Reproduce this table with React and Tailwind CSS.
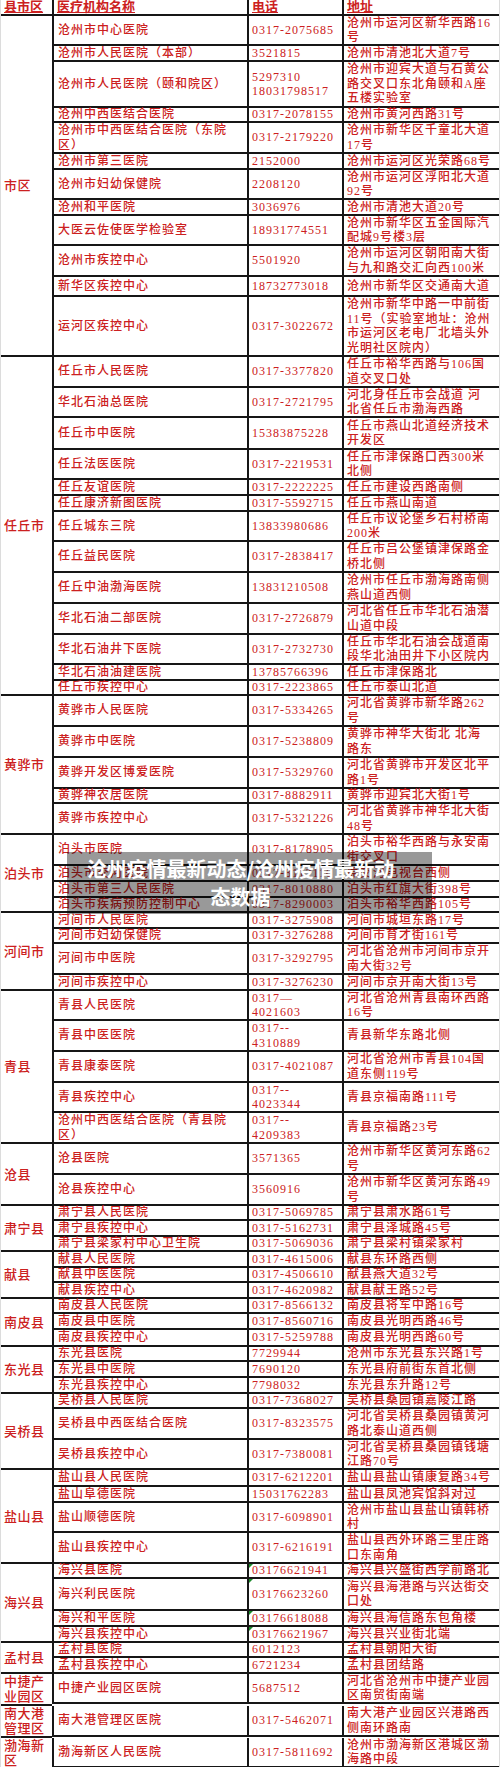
import React from "react";

// 沧州市各县市区医疗机构一览 (name, phone, address, row height)
const sections = [
  {
    area: "市区",
    rows: [
      ["沧州市中心医院", "0317-2075685", "沧州市运河区新华西路16\n号", 30],
      ["沧州市人民医院（本部）", "3521815", "沧州市清池北大道7号", 16],
      ["沧州市人民医院（颐和院区）", "5297310\n18031798517", "沧州市迎宾大道与石黄公\n路交叉口东北角颐和A座\n五楼实验室", 46],
      ["沧州中西医结合医院", "0317-2078155", "沧州市黄河西路31号", 15],
      ["沧州市中西医结合医院（东院\n区）", "0317-2179220", "沧州市新华区千童北大道\n17号", 31],
      ["沧州市第三医院", "2152000", "沧州市运河区光荣路68号", 16],
      ["沧州市妇幼保健院", "2208120", "沧州市运河区浮阳北大道\n92号", 30],
      ["沧州和平医院", "3036976", "沧州市清池大道20号", 16],
      ["大医云佐使医学检验室", "18931774551", "沧州市新华区五金国际汽\n配城9号楼3层", 30],
      ["沧州市疾控中心", "5501920", "沧州市运河区朝阳南大街\n与九和路交汇向西100米", 31],
      ["新华区疾控中心", "18732773018", "沧州市新华区交通南大道", 20],
      ["运河区疾控中心", "0317-3022672", "沧州市新华中路一中前街\n11号（实验室地址：沧州\n市运河区老电厂北墙头外\n光明社区院内）", 60],
    ],
  },
  {
    area: "任丘市",
    rows: [
      ["任丘市人民医院", "0317-3377820", "任丘市裕华西路与106国\n道交叉口处", 31],
      ["华北石油总医院", "0317-2721795", "河北身任丘市会战道 河\n北省任丘市渤海西路", 30],
      ["任丘市中医院", "15383875228", "任丘市燕山北道经济技术\n开发区", 32],
      ["任丘法医医院", "0317-2219531", "任丘市津保路口西300米\n北侧", 30],
      ["任丘友谊医院", "0317-2222225", "任丘市建设西路南侧", 16],
      ["任丘康济新图医院", "0317-5592715", "任丘市燕山南道", 16],
      ["任丘城东三院", "13833980686", "任丘市议论堡乡石村桥南\n200米", 30],
      ["任丘益民医院", "0317-2838417", "任丘市吕公堡镇津保路金\n桥北侧", 31],
      ["任丘中油渤海医院", "13831210508", "沧州市任丘市渤海路南侧\n燕山道西侧", 31],
      ["华北石油二部医院", "0317-2726879", "河北省任丘市华北石油潜\n山道中段", 31],
      ["华北石油井下医院", "0317-2732730", "任丘市华北石油会战道南\n段华北油田井下小区院内", 30],
      ["华北石油油建医院", "13785766396", "任丘市津保路北", 16],
      ["任丘市疾控中心", "0317-2223865", "任丘市泰山北道", 15],
    ],
  },
  {
    area: "黄骅市",
    rows: [
      ["黄骅市人民医院", "0317-5334265", "河北省黄骅市新华路262\n号", 31],
      ["黄骅市中医院", "0317-5238809", "黄骅市神华大街北 北海\n路东", 31],
      ["黄骅开发区博爱医院", "0317-5329760", "河北省黄骅市开发区北平\n路1号", 31],
      ["黄骅神农居医院", "0317-8882911", "黄骅市迎宾北大街1号", 15],
      ["黄骅市疾控中心", "0317-5321226", "河北省黄骅市神华北大街\n48号", 31],
    ],
  },
  {
    area: "泊头市",
    rows: [
      ["泊头市医院", "0317-8178905", "泊头市裕华西路与永安南\n街交叉口", 31],
      ["泊头市交河医院", "0317-8112110", "原交河电视台西侧", 16],
      ["泊头市第三人民医院", "0317-8010880", "泊头市红旗大街398号", 16],
      ["泊头市疾病预防控制中心", "0317-8290003", "泊头市裕华西路105号", 15],
    ],
  },
  {
    area: "河间市",
    rows: [
      ["河间市人民医院", "0317-3275908", "河间市城垣东路17号", 16],
      ["河间市妇幼保健院", "0317-3276288", "河间市育才街161号", 15],
      ["河间市中医院", "0317-3292795", "河北省沧州市河间市京开\n南大街32号", 31],
      ["河间市疾控中心", "0317-3276230", "河间市京开南大街13号", 16],
    ],
  },
  {
    area: "青县",
    rows: [
      ["青县人民医院", "0317—\n4021603", "河北省沧州青县南环西路\n16号", 30],
      ["青县中医医院", "0317--\n4310889", "青县新华东路北侧", 31],
      ["青县康泰医院", "0317-4021087", "河北省沧州市青县104国\n道东侧119号", 31],
      ["青县疾控中心", "0317--\n4023344", "青县京福南路111号", 30],
      ["沧州中西医结合医院（青县院\n区）", "0317--\n4209383", "青县京福路23号", 31],
    ],
  },
  {
    area: "沧县",
    rows: [
      ["沧县医院", "3571365", "沧州市新华区黄河东路62\n号", 31],
      ["沧县疾控中心", "3560916", "沧州市新华区黄河东路49\n号", 31],
    ],
  },
  {
    area: "肃宁县",
    rows: [
      ["肃宁县人民医院", "0317-5069785", "肃宁县肃水路61号", 15],
      ["肃宁县疾控中心", "0317-5162731", "肃宁县泽城路45号", 16],
      ["肃宁县梁家村中心卫生院", "0317-5069036", "肃宁县梁村镇梁家村", 15],
    ],
  },
  {
    area: "献县",
    rows: [
      ["献县人民医院", "0317-4615006", "献县东环路西侧", 16],
      ["献县中医医院", "0317-4506610", "献县燕大道32号", 15],
      ["献县疾控中心", "0317-4620982", "献县献王路52号", 16],
    ],
  },
  {
    area: "南皮县",
    rows: [
      ["南皮县人民医院", "0317-8566132", "南皮县将军中路16号", 15],
      ["南皮县中医院", "0317-8560716", "南皮县光明西路46号", 16],
      ["南皮县疾控中心", "0317-5259788", "南皮县光明西路60号", 17],
    ],
  },
  {
    area: "东光县",
    rows: [
      ["东光县医院", "7729944", "沧州市东光县东兴路1号", 15],
      ["东光县中医院", "7690120", "东光县府前街东首北侧", 16],
      ["东光县疾控中心", "7798032", "东光县东升路12号", 16],
    ],
  },
  {
    area: "吴桥县",
    rows: [
      ["吴桥县人民医院", "0317-7368027", "吴桥县桑园镇嘉陵江路", 15],
      ["吴桥县中西医结合医院", "0317-8323575", "河北省吴桥县桑园镇黄河\n路北泰山道西侧", 31],
      ["吴桥县疾控中心", "0317-7380081", "河北省吴桥县桑园镇钱塘\n江路70号", 30],
    ],
  },
  {
    area: "盐山县",
    rows: [
      ["盐山县人民医院", "0317-6212201", "盐山县盐山镇康复路34号", 17],
      ["盐山阜德医院", "15031762283", "盐山县凤池宾馆斜对过", 16],
      ["盐山顺德医院", "0317-6098901", "沧州市盐山县盐山镇韩桥\n村", 30],
      ["盐山县疾控中心", "0317-6216191", "盐山县西外环路三里庄路\n口东南角", 31],
    ],
  },
  {
    area: "海兴县",
    mark: true,
    rows: [
      ["海兴县医院", "03176621941", "海兴县兴盛街西学前路北", 15],
      ["海兴利民医院", "03176623260", "海兴县海港路与兴达街交\n口处", 32],
      ["海兴和平医院", "03176618088", "海兴县海信路东包角楼", 16],
      ["海兴县疾控中心", "03176621967", "海兴县兴业街北端", 16],
    ],
  },
  {
    area: "孟村县",
    rows: [
      ["孟村县医院", "6012123", "孟村县朝阳大街", 15],
      ["孟村县疾控中心", "6721234", "孟村县团结路", 16],
    ],
  },
  {
    area: "中捷产\n业园区",
    rows: [["中捷产业园区医院", "5687512", "河北省沧州市中捷产业园\n区南贸街南端", 30]],
  },
  {
    area: "南大港\n管理区",
    rows: [["南大港管理区医院", "0317-5462071", "南大港产业园区兴港路西\n侧南环路南", 31]],
  },
  {
    area: "渤海新\n区",
    rows: [["渤海新区人民医院", "0317-5811692", "沧州市渤海新区港城区渤\n海路中段", 30]],
  },
];

const Row = ({ row, mark }) => {
  const [name, phone, addr, h] = row;
  return (
    <div className="flex border-b-2 border-[#161616]" style={{ height: h }}>
      <div className="w-[195px] shrink-0 flex items-center pl-[4px] border-l-2 border-[#161616] whitespace-pre-line">
        {name}
      </div>
      <div className="relative w-[95px] shrink-0 flex items-center pl-[3px] border-l-2 border-[#161616] whitespace-pre-line">
        {mark && (
          <span className="absolute left-0 top-0 w-0 h-0 border-t-[4px] border-r-[4px] border-t-[#1a8a2a] border-r-transparent" />
        )}
        {phone}
      </div>
      <div className="flex-1 flex items-center pl-[3px] border-l-2 border-[#161616] whitespace-pre-line">
        {addr}
      </div>
    </div>
  );
};

export default function App() {
  return (
    <div className="relative w-[500px] h-[1767px] bg-white border-x border-[#dcdcdc] text-[#cc2020] text-[12px] leading-[14.5px] tracking-[1px] font-medium font-['Liberation_Serif','Noto_Sans_CJK_SC',serif]">
      <div className="flex h-[16px] border-b-2 border-[#161616] text-[13px] leading-[14px] tracking-normal font-bold underline decoration-[#cc2020]">
        <div className="w-[51px] shrink-0 flex items-end pl-[3px]">县市区</div>
        <div className="w-[195px] shrink-0 flex items-end pl-[3px] border-l-2 border-[#161616]">医疗机构名称</div>
        <div className="w-[95px] shrink-0 flex items-end pl-[3px] border-l-2 border-[#161616]">电话</div>
        <div className="flex-1 flex items-end pl-[3px] border-l-2 border-[#161616]">地址</div>
      </div>

      {sections.map((s) => (
        <div key={s.area} className="flex">
          <div className="w-[51px] shrink-0 flex items-center pl-[3px] border-b-2 border-[#161616] whitespace-pre-line text-[13px] leading-[15px] tracking-[0.5px]">
            {s.area}
          </div>
          <div className="flex-1 flex flex-col">
            {s.rows.map((r) => (
              <Row key={r[0]} row={r} mark={s.mark} />
            ))}
          </div>
        </div>
      ))}

      <div className="absolute left-[66px] top-[852px] w-[365px] h-[62px] bg-black/40 flex flex-col items-center justify-center pr-[18px] text-white text-[20px] leading-[28px] tracking-normal font-bold font-['Noto_Sans_CJK_SC',sans-serif] no-underline">
        <span>沧州疫情最新动态/沧州疫情最新动</span>
        <span>态数据</span>
      </div>
    </div>
  );
}
